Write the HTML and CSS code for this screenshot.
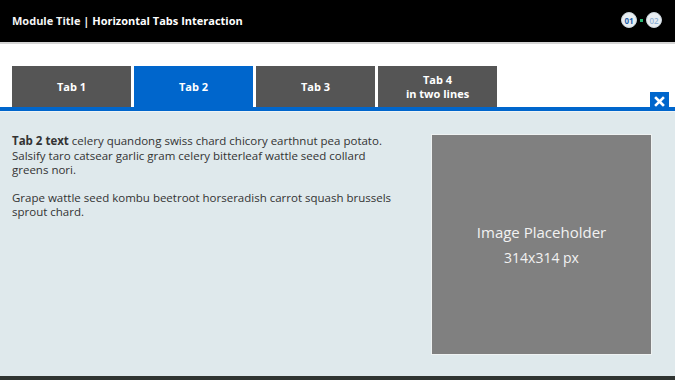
FILE: index.html
```html
<!DOCTYPE html>
<html lang="en">
  <head>
    <meta charset="UTF-8" />
    <title>Module Title | Horizontal Tabs Interaction</title>
    <link rel="stylesheet" href="styles.css">
  </head>
  <body>
    <div class="header">
      <div class="module-title">Module Title | <strong>Horizontal Tabs Interaction</strong></div>
      <div class="pager">
        <span class="page current">01</span>
        <span class="page-dot"></span>
        <span class="page">02</span>
      </div>
    </div>

    <!-- Barra de abas -->
    <div class="tab-bar">
      <div class="tab">Tab 1</div>
      <div class="tab active">Tab 2</div>
      <div class="tab">Tab 3</div>
      <div class="tab">Tab 4<br>in two lines</div>
      <button class="close-btn" aria-label="Close">
        <svg width="11" height="11" viewBox="0 0 11 11">
          <path d="M2 2 L9 9 M9 2 L2 9" stroke="#fff" stroke-width="2.6" stroke-linecap="square" />
        </svg>
      </button>
    </div>

    <div class="tab-content">
      <div class="tab-text">
        <p><strong>Tab 2 text</strong> celery quandong swiss chard chicory earthnut pea potato. Salsify taro catsear garlic gram celery bitterleaf wattle seed collard greens nori.</p>
        <p>Grape wattle seed kombu beetroot horseradish carrot squash brussels sprout chard.</p>
      </div>
      <div class="image-placeholder">
        <span>Image Placeholder</span>
        <span class="size">314x314 px</span>
      </div>
    </div>

    <div class="footer"></div>
  </body>
</html>
```

FILE: styles.css
```css
* {
  margin: 0;
  padding: 0;
  box-sizing: border-box;
}

body {
  width: 675px;
  height: 380px;
  font-family: 'Open Sans', 'Liberation Sans', sans-serif;
  background: #fff;
  display: flex;
  flex-direction: column;
  overflow: hidden;
}

.header {
  height: 44px;
  background: #000;
  border-bottom: 2px solid #d4d4d4;
  display: flex;
  align-items: center;
  justify-content: space-between;
  padding: 0 13px 2px 12px;
}

.module-title {
  color: #f4f4f4;
  font-size: 11px;
  font-weight: 700;
}

.module-title strong {
  color: #fff;
  font-weight: 700;
}

.pager {
  display: flex;
  align-items: center;
  gap: 3px;
}

.page {
  width: 16px;
  height: 16px;
  border-radius: 50%;
  background: #e8eef2;
  border: 1px solid #c9d3da;
  color: #8fb2d6;
  font-size: 8px;
  font-weight: 600;
  display: flex;
  align-items: center;
  justify-content: center;
}

.page.current {
  color: #1f5fa8;
  font-weight: 700;
}

.page-dot {
  width: 3px;
  height: 3px;
  background: #2bb673;
}

/* Barra de abas */
.tab-bar {
  display: flex;
  align-items: flex-end;
  gap: 3px;
  padding: 22px 6px 0 12px;
  border-bottom: 4px solid #0066cc;
}

.tab {
  width: 119px;
  height: 41px;
  background: #555;
  color: #fff;
  font-size: 11px;
  font-weight: 700;
  line-height: 14px;
  text-align: center;
  display: flex;
  align-items: center;
  justify-content: center;
}

.tab.active {
  background: #0066cc;
}

.close-btn {
  margin-left: auto;
  width: 19px;
  height: 19px;
  background: #0066cc;
  border: none;
  display: flex;
  align-items: center;
  justify-content: center;
  margin-bottom: -4px;
}

.tab-content {
  flex: 1;
  background: #dfe9ec;
  border-top: 1px solid #eef4f6;
  display: flex;
  justify-content: space-between;
  padding: 22px 23px 0 12px;
}

.tab-text {
  width: 388px;
  color: #333;
  font-size: 11.5px;
  line-height: 14.5px;
}

.tab-text p {
  margin-bottom: 13px;
}

.image-placeholder {
  width: 221px;
  height: 221px;
  background: #808080;
  border: 1px solid #eef2f2;
  color: #f2f2f2;
  font-size: 15px;
  display: flex;
  flex-direction: column;
  align-items: center;
  justify-content: center;
  gap: 6px;
}

.image-placeholder .size {
  font-size: 14px;
}

.footer {
  height: 4px;
  background: #2f3431;
}
```
